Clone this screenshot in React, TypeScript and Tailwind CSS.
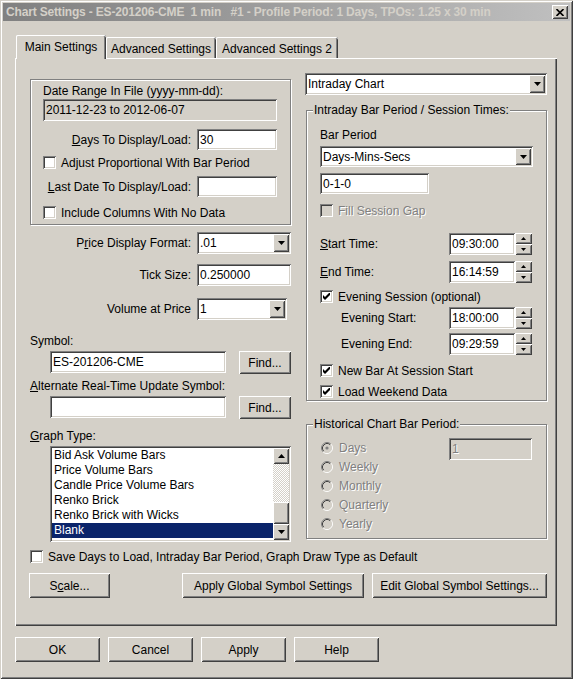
import React from "react";

// classic 3D edges, drawn with inset shadows so they take no layout space
const sunken =
  "shadow-[inset_1px_1px_#808080,inset_-1px_-1px_#ffffff,inset_2px_2px_#404040,inset_-2px_-2px_#d4d0c8]";
const raised =
  "shadow-[inset_1px_1px_#ffffff,inset_-1px_-1px_#404040,inset_2px_2px_#d4d0c8,inset_-2px_-2px_#808080]";
const etched = "border border-[#808080] shadow-[inset_1px_1px_#ffffff,1px_1px_#ffffff]";
const dim = "text-[#808080] [text-shadow:1px_1px_#ffffff]";

function Arrow({ up = false, small = false }: { up?: boolean; small?: boolean }) {
  const w = small ? 5 : 7;
  const h = small ? 3 : 4;
  const d = up ? `M0 ${h}H${w}L${w / 2} 0z` : `M0 0H${w}L${w / 2} ${h}z`;
  return (
    <svg width={w} height={h} viewBox={`0 0 ${w} ${h}`}>
      <path d={d} fill="#000" />
    </svg>
  );
}

function Field({ value = "", className = "", disabled = false, grey = false }: { value?: string; className?: string; disabled?: boolean; grey?: boolean }) {
  return (
    <div className={`${sunken} ${disabled || grey ? "bg-[#d4d0c8]" : "bg-white"} flex items-center pl-[3px] ${className}`}>
      <span className={disabled ? dim : ""}>{value}</span>
    </div>
  );
}

function Combo({ value, className = "" }: { value: string; className?: string }) {
  return (
    <div className={`${sunken} bg-white flex items-stretch p-[2px] ${className}`}>
      <span className="flex-1 flex items-center pl-[1px]">{value}</span>
      <span className={`${raised} bg-[#d4d0c8] w-[16px] flex items-center justify-center`}>
        <Arrow />
      </span>
    </div>
  );
}

function TimeBox({ value }: { value: string }) {
  return (
    <div className="flex h-[22px]">
      <Field value={value} className="w-[66px] h-full" />
      <div className="flex flex-col w-[17px] h-full">
        <span className={`${raised} bg-[#d4d0c8] flex-1 flex items-center justify-center`}>
          <Arrow up small />
        </span>
        <span className={`${raised} bg-[#d4d0c8] flex-1 flex items-center justify-center`}>
          <Arrow small />
        </span>
      </div>
    </div>
  );
}

function CheckBox({ label, checked = false, disabled = false, className = "" }: { label: string; checked?: boolean; disabled?: boolean; className?: string }) {
  return (
    <div className={`flex items-center h-[13px] ${className}`}>
      <span className={`${sunken} w-[13px] h-[13px] shrink-0 ${disabled ? "bg-[#d4d0c8]" : "bg-white"} flex items-center justify-center`}>
        {checked && (
          <svg width="7" height="7" viewBox="0 0 7 7">
            <path d="M0 2L2 4L7 -1V2L2 7L0 5z" fill="#000" />
          </svg>
        )}
      </span>
      <span className={`ml-[5px] whitespace-nowrap ${disabled ? dim : ""}`}>{label}</span>
    </div>
  );
}

function Radio({ label, checked = false }: { label: string; checked?: boolean }) {
  return (
    <div className="flex items-center h-[19px]">
      <svg width="12" height="12" viewBox="0 0 12 12" className="shrink-0">
        <circle cx="6" cy="6" r="4.5" fill="#d4d0c8" />
        <path d="M2.11 9.89A5.5 5.5 0 0 1 9.89 2.11" stroke="#808080" fill="none" />
        <path d="M9.89 2.11A5.5 5.5 0 0 1 2.11 9.89" stroke="#ffffff" fill="none" />
        <path d="M2.82 9.18A4.5 4.5 0 0 1 9.18 2.82" stroke="#404040" fill="none" />
        <path d="M9.18 2.82A4.5 4.5 0 0 1 2.82 9.18" stroke="#d4d0c8" fill="none" />
        {checked && <circle cx="6" cy="6" r="1.6" fill="#808080" />}
      </svg>
      <span className={`ml-[6px] ${dim}`}>{label}</span>
    </div>
  );
}

function Button({ children, className = "" }: { children: React.ReactNode; className?: string }) {
  return (
    <div className={`${raised} bg-[#d4d0c8] flex items-center justify-center whitespace-nowrap ${className}`}>
      {children}
    </div>
  );
}

function GroupTitle({ text }: { text: string }) {
  return (
    <span className="absolute left-[6px] top-[-8px] px-[1px] bg-[#d4d0c8] leading-[14px]">{text}</span>
  );
}

const graphTypes = [
  "Bid Ask Volume Bars",
  "Price Volume Bars",
  "Candle Price Volume Bars",
  "Renko Brick",
  "Renko Brick with Wicks",
  "Blank",
];

export default function App() {
  return (
    <div className="w-[573px] h-[679px] bg-[#d4d0c8] p-[3px] text-[12px] leading-[14px] text-black font-['Liberation_Sans',Arial,sans-serif] shadow-[inset_1px_1px_#d4d0c8,inset_-1px_-1px_#404040,inset_2px_2px_#ffffff,inset_-2px_-2px_#808080]">
      {/* title bar (inactive) */}
      <div className="h-[18px] flex items-center justify-between pl-[3px] pr-[2px] bg-gradient-to-r from-[#808080] to-[#c0c0c0]">
        <span className="font-bold text-[#d4d0c8] text-[12px] tracking-[-0.17px] whitespace-pre">
          Chart Settings - ES-201206-CME  1 min   #1 - Profile Period: 1 Days, TPOs: 1.25 x 30 min
        </span>
        <span className={`${raised} bg-[#d4d0c8] w-[16px] h-[14px] flex items-center justify-center`}>
          <svg width="8" height="7" viewBox="0 0 8 7">
            <path d="M0.5 0L7.5 7M7.5 0L0.5 7" stroke="#000" strokeWidth="1.6" />
          </svg>
        </span>
      </div>

      <div className="pl-[12px] pr-[13px] pt-[14px]">
        {/* tabs */}
        <div className="flex items-end h-[23px]">
          <div className="relative z-10 ml-[1px] w-[90px] h-[24px] -mb-[1px] pt-[5px] text-center bg-[#d4d0c8] rounded-t-[2px] shadow-[inset_1px_0_#ffffff,inset_0_1px_#ffffff,inset_-1px_0_#404040,inset_-2px_0_#808080]">
            Main Settings
          </div>
          <div className="w-[110px] h-[21px] pt-[5px] text-center rounded-t-[2px] shadow-[inset_1px_0_#ffffff,inset_0_1px_#ffffff,inset_-1px_0_#404040,inset_-2px_0_#808080]">
            Advanced Settings
          </div>
          <div className="w-[122px] h-[21px] pt-[5px] text-center rounded-t-[2px] shadow-[inset_1px_0_#ffffff,inset_0_1px_#ffffff,inset_-1px_0_#404040,inset_-2px_0_#808080]">
            Advanced Settings 2
          </div>
        </div>

        {/* tab page */}
        <div className="h-[568px] pl-[15px] pr-[10px] pt-[15px] flex flex-col shadow-[inset_1px_1px_#ffffff,inset_-1px_-1px_#404040,inset_-2px_-2px_#808080]">
          <div className="flex gap-[14px]">
            {/* left column */}
            <div className="w-[261px] flex flex-col mt-[6px]">
              <div className={`relative ${etched} h-[146px] flex flex-col pl-[12px] pr-[13px]`}>
                <div className="mt-[4px]">Date Range In File (yyyy-mm-dd):</div>
                <Field grey value="2011-12-23 to 2012-06-07" className="mt-[1px] h-[22px]" />
                <div className="mt-[8px] flex items-center justify-end gap-[6px]">
                  <span>
                    <span className="underline">D</span>ays To Display/Load:
                  </span>
                  <Field value="30" className="w-[80px] h-[21px]" />
                </div>
                <CheckBox className="mt-[6px]" label="Adjust Proportional With Bar Period" />
                <div className="mt-[7px] flex items-center justify-end gap-[6px]">
                  <span>
                    <span className="underline">L</span>ast Date To Display/Load:
                  </span>
                  <Field className="w-[80px] h-[21px]" />
                </div>
                <CheckBox className="mt-[9px]" label="Include Columns With No Data" />
              </div>

              <div className="mt-[7px] flex items-center">
                <span className="w-[161px] text-right">
                  P<span className="underline">r</span>ice Display Format:
                </span>
                <Combo value=".01" className="ml-[6px] w-[94px] h-[22px]" />
              </div>
              <div className="mt-[10px] flex items-center">
                <span className="w-[161px] text-right">Tick Size:</span>
                <Field value="0.250000" className="ml-[6px] w-[94px] h-[22px]" />
              </div>
              <div className="mt-[12px] flex items-center">
                <span className="w-[161px] text-right">Volume at Price</span>
                <Combo value="1" className="ml-[6px] w-[90px] h-[22px]" />
              </div>

              <div className="mt-[14px]">Symbol:</div>
              <div className="mt-[3px] flex pl-[20px]">
                <Field value="ES-201206-CME" className="w-[176px] h-[22px]" />
                <Button className="ml-[13px] w-[52px] h-[23px]">Find...</Button>
              </div>
              <div className="mt-[5px]">
                <span className="underline">A</span>lternate Real-Time Update Symbol:
              </div>
              <div className="mt-[3px] flex pl-[20px]">
                <Field className="w-[176px] h-[22px]" />
                <Button className="ml-[13px] w-[52px] h-[23px]">Find...</Button>
              </div>
              <div className="mt-[10px]">
                <span className="underline">G</span>raph Type:
              </div>

              <div className={`ml-[20px] mt-[3px] w-[241px] h-[96px] bg-white ${sunken} p-[2px] flex`}>
                <div className="flex-1 flex flex-col">
                  {graphTypes.map((t) => (
                    <div
                      key={t}
                      className={`h-[15px] leading-[15px] pl-[2px] ${t === "Blank" ? "bg-[#0a246a] text-white" : ""}`}
                    >
                      {t}
                    </div>
                  ))}
                </div>
                <div className="w-[16px] flex flex-col">
                  <span className={`${raised} bg-[#d4d0c8] h-[16px] flex items-center justify-center`}>
                    <Arrow up />
                  </span>
                  <div className="h-[38px] bg-[repeating-conic-gradient(#ffffff_0_25%,#d4d0c8_0_50%)] bg-[length:2px_2px]" />
                  <div className={`${raised} bg-[#d4d0c8] h-[22px]`} />
                  <span className={`${raised} bg-[#d4d0c8] h-[16px] flex items-center justify-center`}>
                    <Arrow />
                  </span>
                </div>
              </div>
            </div>

            {/* right column */}
            <div className="w-[242px] flex flex-col">
              <Combo value="Intraday Chart" className="h-[22px]" />

              <div className={`relative ${etched} ml-[1px] mt-[15px] h-[291px] flex flex-col pl-[13px]`}>
                <GroupTitle text="Intraday Bar Period / Session Times:" />
                <div className="mt-[17px]">Bar Period</div>
                <Combo value="Days-Mins-Secs" className="mt-[4px] w-[213px] h-[21px]" />
                <Field value="0-1-0" className="mt-[6px] w-[109px] h-[21px]" />
                <CheckBox className="mt-[10px]" disabled label="Fill Session Gap" />
                <div className="mt-[16px] w-[212px] flex items-center justify-between">
                  <span>
                    <span className="underline">S</span>tart Time:
                  </span>
                  <TimeBox value="09:30:00" />
                </div>
                <div className="mt-[6px] w-[212px] flex items-center justify-between">
                  <span>
                    <span className="underline">E</span>nd Time:
                  </span>
                  <TimeBox value="16:14:59" />
                </div>
                <CheckBox className="mt-[7px]" checked label="Evening Session (optional)" />
                <div className="mt-[4px] w-[212px] flex items-center justify-between">
                  <span className="pl-[21px]">Evening Start:</span>
                  <TimeBox value="18:00:00" />
                </div>
                <div className="mt-[4px] w-[212px] flex items-center justify-between">
                  <span className="pl-[21px]">Evening End:</span>
                  <TimeBox value="09:29:59" />
                </div>
                <CheckBox className="mt-[9px]" checked label="New Bar At Session Start" />
                <CheckBox className="mt-[8px]" checked label="Load Weekend Data" />
              </div>

              <div className={`relative ${etched} ml-[1px] mt-[23px] h-[115px] flex pl-[14px] pr-[14px] pt-[13px]`}>
                <GroupTitle text="Historical Chart Bar Period:" />
                <div className="flex flex-col">
                  <Radio checked label="Days" />
                  <Radio label="Weekly" />
                  <Radio label="Monthly" />
                  <Radio label="Quarterly" />
                  <Radio label="Yearly" />
                </div>
                <Field disabled value="1" className="ml-auto w-[83px] h-[22px]" />
              </div>
            </div>
          </div>

          <CheckBox className="mt-[8px]" label="Save Days to Load, Intraday Bar Period, Graph Draw Type as Default" />

          <div className="mt-[10px] flex">
            <Button className="-ml-[1px] w-[81px] h-[25px]">
              S<span className="underline">c</span>ale...
            </Button>
            <Button className="ml-[72px] w-[182px] h-[25px]">Apply Global Symbol Settings</Button>
            <Button className="ml-[8px] w-[175px] h-[25px]">Edit Global Symbol Settings...</Button>
          </div>
        </div>

        {/* dialog buttons */}
        <div className="mt-[11px] flex gap-[8px]">
          <Button className="w-[85px] h-[25px]">OK</Button>
          <Button className="w-[85px] h-[25px]">Cancel</Button>
          <Button className="w-[85px] h-[25px]">Apply</Button>
          <Button className="w-[85px] h-[25px]">Help</Button>
        </div>
      </div>
    </div>
  );
}
